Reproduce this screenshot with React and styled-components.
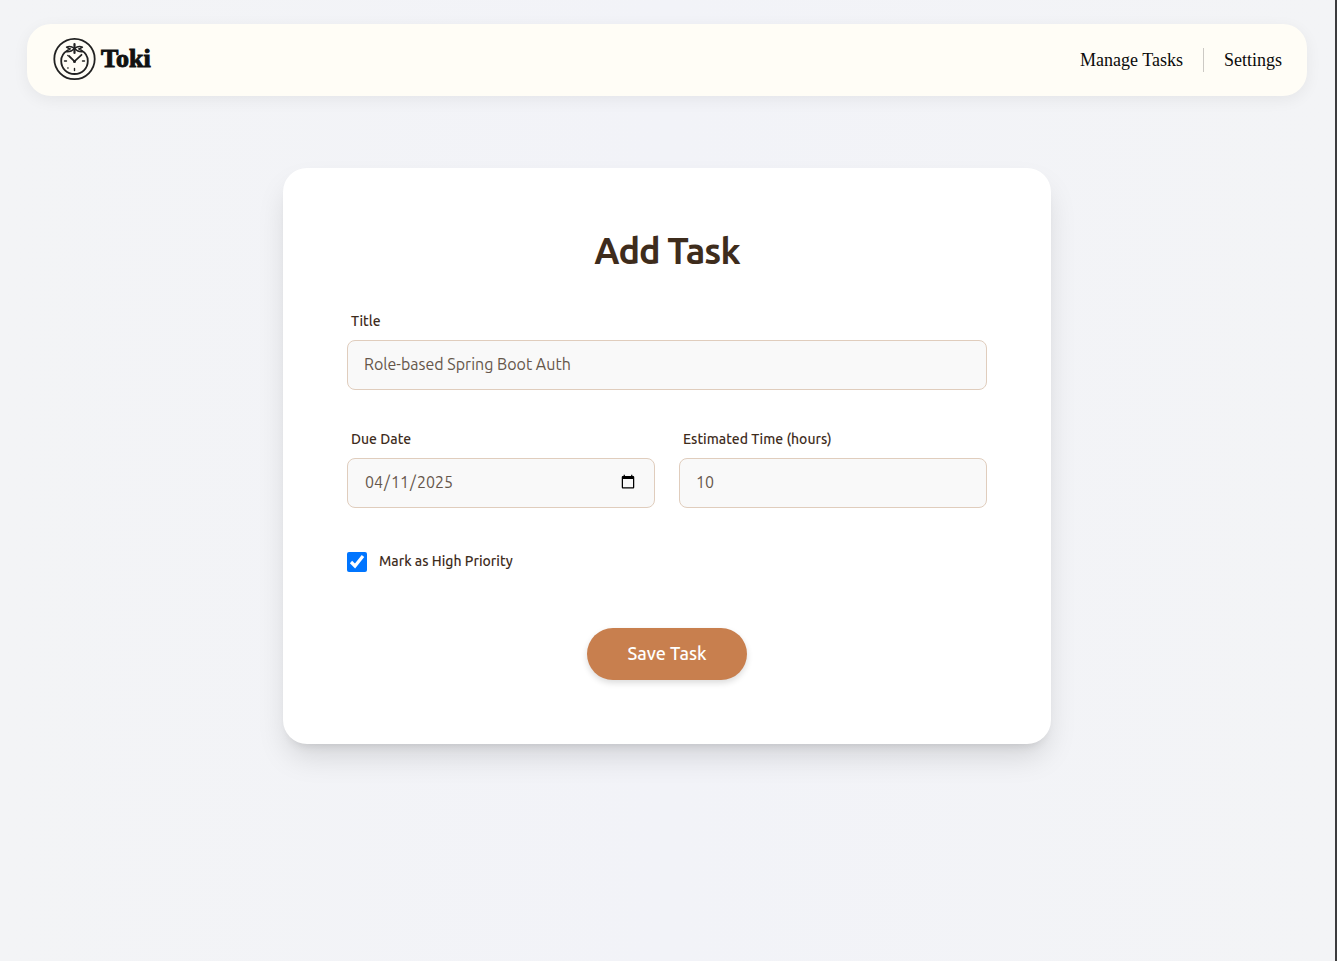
import React, { useState } from "react";
import styled, { createGlobalStyle } from "styled-components";

const sans = `Ubuntu, "Open Sans", "Noto Sans", sans-serif`;
const serif = `"Liberation Serif", "Times New Roman", serif`;

const GlobalStyle = createGlobalStyle`
  *, *::before, *::after { box-sizing: border-box; }
  body { margin: 0; font-family: ${serif}; background: #f3f4f6; }
`;

const Page = styled.div`
  min-height: 100vh;
  padding: 24px 25px 24px 24px;
  display: flex;
  flex-direction: column;
  align-items: center;
  gap: 72px;
  border-right: 2px solid #3c3c3e;
  background: linear-gradient(to right, #f3f4f6, #f2f3f8, #f3f4f6);
`;

const Header = styled.header`
  width: 100%;
  max-width: 1280px;
  height: 72px;
  padding: 0 25px;
  display: flex;
  align-items: center;
  justify-content: space-between;
  border-radius: 24px;
  background: #fffdf6;
  box-shadow: 0 4px 16px rgba(0, 0, 0, 0.06);
`;

const Brand = styled.a`
  display: flex;
  align-items: center;
  gap: 4px;
  padding: 0 0 2px 1px;
  color: #111;
  text-decoration: none;
`;

const BrandName = styled.span`
  font: 700 26px/32px ${serif};
  -webkit-text-stroke: 1px #111;
`;

const Nav = styled.nav`
  display: flex;
  align-items: center;
`;

const NavLink = styled.a`
  font-size: 18px;
  line-height: 24px;
  color: #0a0a0a;
  text-decoration: none;

  & + & {
    margin-left: 20px;
    padding-left: 20px;
    border-left: 1px solid #ccc9c4;
  }
`;

const Card = styled.form`
  width: 100%;
  max-width: 768px;
  padding: 64px;
  display: flex;
  flex-direction: column;
  border-radius: 24px;
  background: #fff;
  box-shadow: 0 16px 30px -4px rgba(0, 0, 0, 0.13), 0 8px 10px -6px rgba(0, 0, 0, 0.1);
  font-family: ${sans};
  color: #3e2c1c;
`;

const Heading = styled.h1`
  margin: 0 0 42px;
  font-size: 36px;
  line-height: 38px;
  font-weight: 600;
  letter-spacing: -0.025em;
  text-align: center;
`;

const Fields = styled.div`
  display: grid;
  grid-template-columns: 1fr 1fr;
  gap: 40px 24px;
`;

const Field = styled.div`
  grid-column: ${(p) => (p.$wide ? "1 / -1" : "auto")};
  display: flex;
  flex-direction: column;
  gap: 10px;
`;

const Label = styled.label`
  padding-left: 4px;
  font-size: 14px;
  line-height: 18px;
  font-weight: 550;
`;

const Input = styled.input`
  width: 100%;
  height: 50px;
  padding: 0 16px 2px;
  border: 1px solid #e0cdbd;
  border-radius: 8px;
  background: #f9f9f9;
  font: 400 16px/24px ${sans};
  color: #65564a;
  outline: none;
`;

const Priority = styled.div`
  margin-top: 43px;
  display: flex;
  align-items: center;
  gap: 12px;
`;

const Checkbox = styled.input`
  width: 20px;
  height: 20px;
  margin: 0;
  accent-color: #0075ff;
`;

const PriorityLabel = styled.label`
  font-size: 14px;
  line-height: 20px;
  font-weight: 500;
  padding-bottom: 2px;
`;

const SaveButton = styled.button`
  align-self: center;
  margin-top: 55px;
  padding: 11px 40px 13px;
  border: 0;
  border-radius: 26px;
  background: #c87f4e;
  color: #fff;
  font: 18px/28px ${sans};
  font-weight: 540;
  box-shadow: 0 3px 6px rgba(0, 0, 0, 0.14);
  cursor: pointer;
`;

function TomatoClock() {
  return (
    <svg width="44" height="44" viewBox="0 0 44 44" fill="none" stroke="#222" strokeLinecap="round" aria-hidden="true">
      <circle cx="21.500" cy="22" r="20.200" strokeWidth="1.800" />
      <path
        d="M14.500 13.500C10 16 8.200 20 8.200 24c0 7.500 5.800 13 13.300 13s13.300-5.500 13.300-13c0-4-1.800-8-6.300-10.500"
        strokeWidth="1.800"
      />
      <path
        d="M21.500 11.500C19 9.500 16 9 13.500 10.200c1.500 1.100 2.500 1.500 4 1.600-2 .6-3.200 1.500-3.800 3 3 .2 5.500-.8 7.800-3.300 2.300 2.500 4.800 3.500 7.800 3.300-.6-1.500-1.800-2.400-3.800-3 1.500-.1 2.500-.5 4-1.600-2.500-1.200-5.500-.7-8 1.300Z"
        strokeWidth="1.300"
        strokeLinejoin="round"
      />
      <path d="M21.500 7V16" strokeWidth="2.200" />
      <path d="M16 19l5.500 5.300 7-6.500" strokeWidth="1.800" />
      <circle cx="21.500" cy="24.500" r="1.500" fill="#222" stroke="none" />
      <path d="M11.500 24h2M29.500 24h2M21.500 31.500v2M14.800 31h.3M14.800 18.500h.1" strokeWidth="1.400" />
    </svg>
  );
}

export default function App() {
  const [task, setTask] = useState({
    title: "Role-based Spring Boot Auth",
    due: "2025-04-11",
    hours: "10",
    high: true,
  });
  const update = (key) => (e) => setTask({ ...task, [key]: e.target.value });

  return (
    <>
      <GlobalStyle />
      <Page>
        <Header>
          <Brand href="#">
            <TomatoClock />
            <BrandName>Toki</BrandName>
          </Brand>
          <Nav>
            <NavLink href="#tasks">Manage Tasks</NavLink>
            <NavLink href="#settings">Settings</NavLink>
          </Nav>
        </Header>
        <Card onSubmit={(e) => e.preventDefault()}>
          <Heading>Add Task</Heading>
          <Fields>
            <Field $wide>
              <Label htmlFor="title">Title</Label>
              <Input id="title" type="text" value={task.title} onChange={update("title")} />
            </Field>
            <Field>
              <Label htmlFor="due">Due Date</Label>
              <Input id="due" type="date" value={task.due} onChange={update("due")} />
            </Field>
            <Field>
              <Label htmlFor="hours">Estimated Time (hours)</Label>
              <Input id="hours" type="number" value={task.hours} onChange={update("hours")} />
            </Field>
          </Fields>
          <Priority>
            <Checkbox
              id="high"
              type="checkbox"
              checked={task.high}
              onChange={(e) => setTask({ ...task, high: e.target.checked })}
            />
            <PriorityLabel htmlFor="high">Mark as High Priority</PriorityLabel>
          </Priority>
          <SaveButton type="submit">Save Task</SaveButton>
        </Card>
      </Page>
    </>
  );
}
